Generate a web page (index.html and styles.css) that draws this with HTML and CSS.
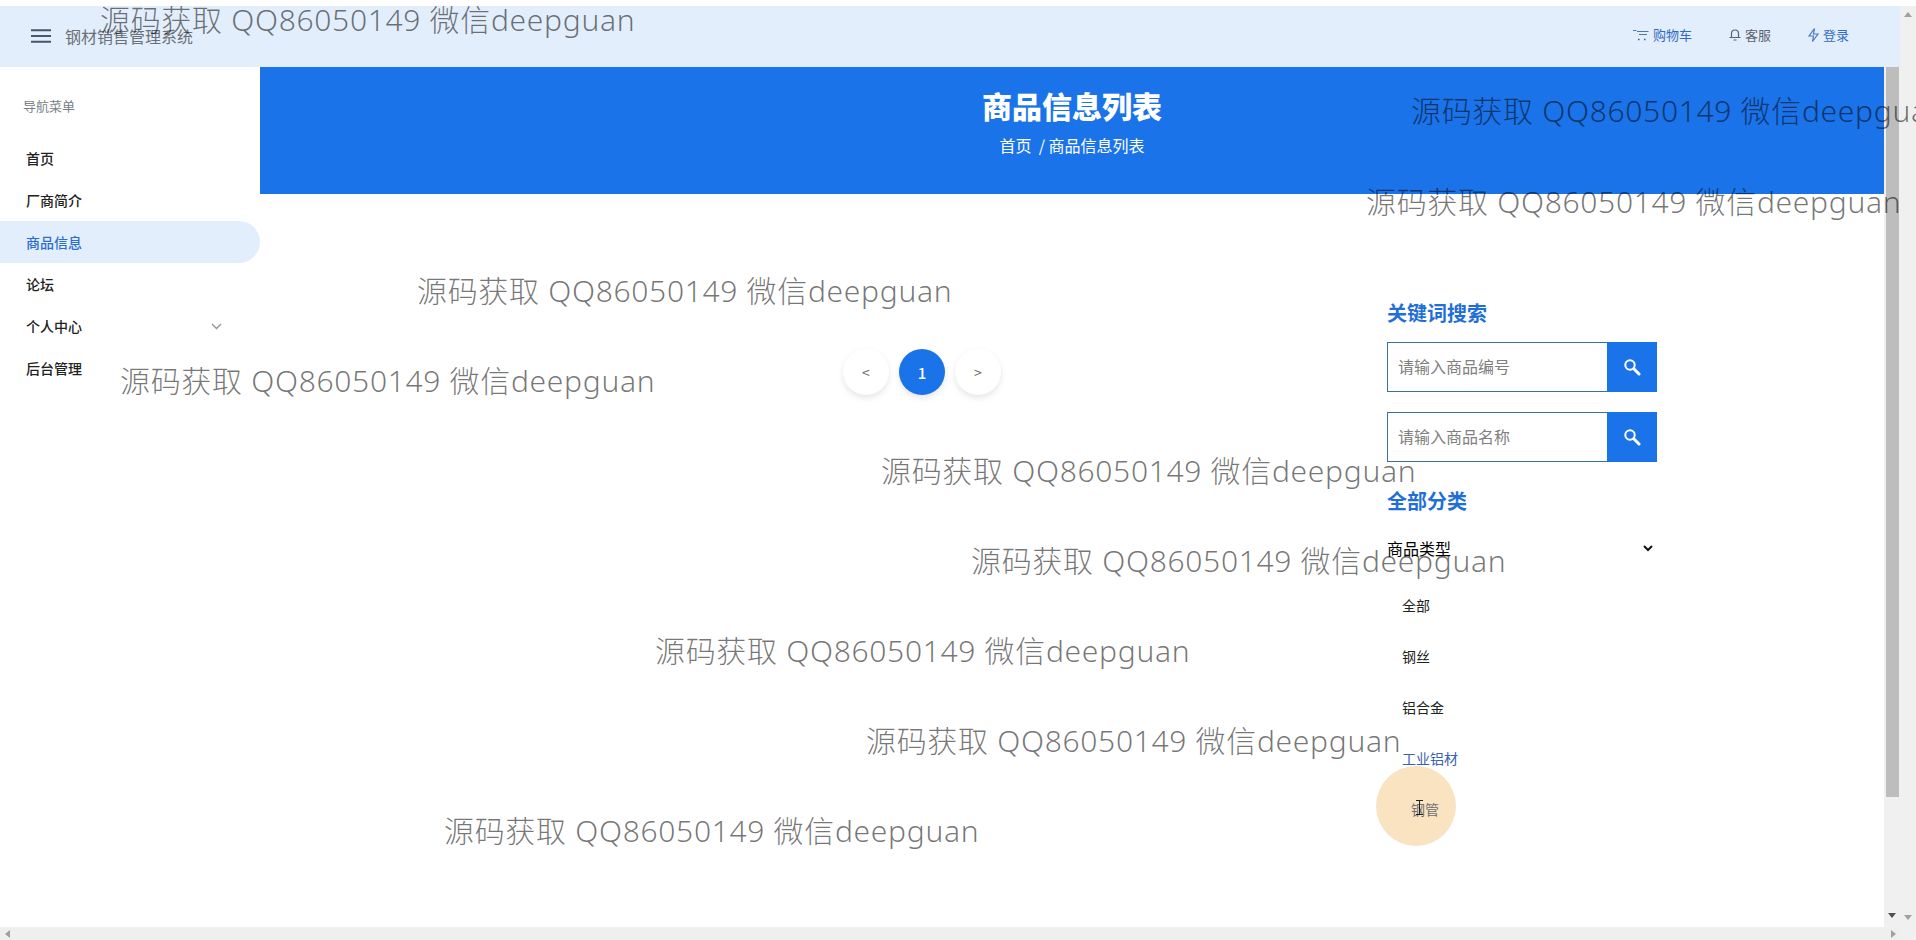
FILE: index.html
```html
<!DOCTYPE html>
<html lang="zh-CN">
<head>
    <meta charset="UTF-8">
    <title>钢材销售管理系统</title>
    <link rel="stylesheet" href="styles.css">
</head>
<body>
    <div class="window">
        <div class="page">
            <div class="top-gap"></div>
            <header class="topbar">
                <div class="brand">
                    <svg class="burger" width="20" height="14" viewBox="0 0 20 14"><path d="M0 1.2h20M0 7h20M0 12.8h20" stroke="#4a5568" stroke-width="2"/></svg>
                    <span>钢材销售管理系统</span>
                </div>
                <nav class="top-links">
                    <a class="blue"><svg width="16" height="12" viewBox="0 0 16 12" fill="none"><path d="M0 1.5h3.5M4 2.5h11.5M6 5.5h8" stroke="#4a78c0" stroke-width="1"/><path d="M5 10.5h1.5M11 10.5h1.5" stroke="#4a5568" stroke-width="1.5"/></svg>购物车</a>
                    <a><svg width="12" height="13" viewBox="0 0 12 13" fill="none" stroke="#5a6270" stroke-width="1.2"><path d="M2.5 9V5.500a3.500 3.500 0 0 1 7 0V9M.5 9.500h11M4.500 12h3"/></svg>客服</a>
                    <a class="blue"><svg width="11" height="14" viewBox="0 0 11 14" fill="none" stroke="#4a78c0" stroke-width="1.2"><path d="M6.500.5 1 8h4.500l-1 5.500L10 6H5.500z"/></svg>登录</a>
                </nav>
            </header>
            <div class="body-row">
                <aside class="sidebar">
                    <div class="side-title">导航菜单</div>
                    <ul class="menu">
                        <li>首页</li>
                        <li>厂商简介</li>
                        <li class="active">商品信息</li>
                        <li>论坛</li>
                        <li>个人中心<svg width="11" height="7" viewBox="0 0 11 7" fill="none"><path d="M1 1l4.500 4.500L10 1" stroke="#8a919c" stroke-width="1.3"/></svg></li>
                        <li>后台管理</li>
                    </ul>
                </aside>
                <main class="content">
                    <section class="banner">
                        <h1>商品信息列表</h1>
                        <p>首页 &nbsp;/ 商品信息列表</p>
                    </section>
                    <div class="container">
                        <div class="list-col">
                            <div class="pager">
                                <span class="dot">&lt;</span>
                                <span class="dot on">1</span>
                                <span class="dot">&gt;</span>
                            </div>
                        </div>
                        <div class="filter-col">
                            <h3>关键词搜索</h3>
                            <div class="search">
                                <input type="text" placeholder="请输入商品编号">
                                <button><svg width="18" height="18" viewBox="0 0 18 18" fill="none"><circle cx="7" cy="7" r="4.7" stroke="#fff" stroke-width="2"/><path d="M10.800 10.800 16 16" stroke="#fff" stroke-width="3" stroke-linecap="round"/></svg></button>
                            </div>
                            <div class="search second">
                                <input type="text" placeholder="请输入商品名称">
                                <button><svg width="18" height="18" viewBox="0 0 18 18" fill="none"><circle cx="7" cy="7" r="4.7" stroke="#fff" stroke-width="2"/><path d="M10.800 10.800 16 16" stroke="#fff" stroke-width="3" stroke-linecap="round"/></svg></button>
                            </div>
                            <h3 class="cat-title">全部分类</h3>
                            <div class="cat-head">
                                <span>商品类型</span>
                                <svg width="10" height="7" viewBox="0 0 10 7" fill="none"><path d="M1 1l4 4 4-4" stroke="#111" stroke-width="2"/></svg>
                            </div>
                            <ul class="cats">
                                <li>全部</li>
                                <li>钢丝</li>
                                <li>铝合金</li>
                                <li class="hover">工业铝材</li>
                                <li class="moved">钢管</li>
                            </ul>
                        </div>
                    </div>
                </main>
                <div class="vbar inner">
                    <div class="thumb"></div>
                    <i class="arrow-down"></i>
                </div>
            </div>
            <div class="hbar">
                <i class="arrow-left"></i>
                <i class="arrow-right"></i>
            </div>
        </div>
        <div class="vbar outer">
            <i class="arrow-up"></i>
            <i class="arrow-down"></i>
        </div>
    </div>

    <!-- mouse highlight -->
    <div class="spot"></div>
    <svg class="ibeam" width="7" height="15" viewBox="0 0 7 15" fill="none"><path d="M0 .5h7M0 14.500h7M3.500 .5v14" stroke="#222" stroke-width="1"/></svg>

    <div class="wm wm1">源码获取 QQ86050149 微信deepguan</div>
    <div class="wm wm2">源码获取 QQ86050149 微信deepguan</div>
    <div class="wm wm3">源码获取 QQ86050149 微信deepguan</div>
    <div class="wm wm4">源码获取 QQ86050149 微信deepguan</div>
    <div class="wm wm5">源码获取 QQ86050149 微信deepguan</div>
    <div class="wm wm6">源码获取 QQ86050149 微信deepguan</div>
    <div class="wm wm7">源码获取 QQ86050149 微信deepguan</div>
    <div class="wm wm8">源码获取 QQ86050149 微信deepguan</div>
    <div class="wm wm9">源码获取 QQ86050149 微信deepguan</div>
    <div class="wm wm10">源码获取 QQ86050149 微信deepguan</div>
</body>
</html>
```

FILE: styles.css
```css
* {
    box-sizing: border-box;
}

html, body {
    height: 100%;
}

body {
    margin: 0;
    overflow: hidden;
    background: #fff;
    color: #111;
    font-family: "Noto Sans CJK SC", "Noto Sans", sans-serif;
}

ul {
    list-style: none;
    margin: 0;
    padding: 0;
}

.window {
    display: flex;
    height: 100vh;
}

.page {
    flex: 1;
    min-width: 0;
    display: flex;
    flex-direction: column;
}

.top-gap {
    height: 6px;
    flex: none;
}

/* header */
.topbar {
    height: 61px;
    flex: none;
    display: flex;
    justify-content: space-between;
    align-items: center;
    padding: 0 51px 2px 31px;
    background: #e3eefc;
}

.brand {
    display: flex;
    align-items: center;
    gap: 14px;
    font-size: 16px;
    color: #6a7078;
}

.top-links {
    display: flex;
    gap: 37px;
    margin-bottom: 2px;
    font-size: 13px;
    color: #5a6270;
}

.top-links a {
    display: flex;
    align-items: center;
    gap: 4px;
}

.top-links a.blue {
    color: #2f6bc4;
}

.body-row {
    flex: 1;
    min-height: 0;
    display: flex;
}

/* sidebar */
.sidebar {
    width: 260px;
    flex: none;
    padding-top: 27px;
}

.side-title {
    padding-left: 23px;
    font-size: 13px;
    line-height: 24px;
    color: #7a7f87;
}

.menu {
    margin-top: 19px;
    font-size: 14px;
    font-weight: 500;
}

.menu li {
    height: 42px;
    display: flex;
    align-items: center;
    justify-content: space-between;
    padding: 0 38px 0 26px;
    color: #222;
}

.menu li.active {
    background: #e3eefc;
    color: #2a6fd0;
    border-radius: 0 21px 21px 0;
}

/* main */
.content {
    flex: 1;
    min-width: 0;
}

.banner {
    height: 127px;
    padding-top: 17px;
    text-align: center;
    color: #fff;
    background: #1a73e8;
}

.banner h1 {
    margin: 0;
    font-size: 30px;
    line-height: 42px;
    font-weight: 900;
}

.banner p {
    margin: 0;
    font-size: 16px;
    line-height: 24px;
    margin-top: 7px;
}

.container {
    width: 1200px;
    margin: 0 auto;
    display: flex;
}

.list-col {
    width: 900px;
    padding-top: 155px;
}

.pager {
    display: flex;
    justify-content: center;
    gap: 10px;
}

.dot {
    width: 46px;
    height: 46px;
    display: flex;
    align-items: center;
    justify-content: center;
    border-radius: 50%;
    background: #fff;
    color: #666;
    font-size: 14px;
    box-shadow: 0 3px 6px rgba(0, 0, 0, 0.1);
}

.dot.on {
    background: #1a73e8;
    color: #fff;
    font-size: 15px;
    font-weight: 500;
}

.filter-col {
    width: 300px;
    padding: 105px 15px 0;
}

.filter-col h3 {
    margin: 0;
    font-size: 20px;
    line-height: 28px;
    font-weight: 700;
    color: #1f6fd8;
}

.search {
    display: flex;
    height: 50px;
    margin-top: 15px;
}

.search.second {
    margin-top: 20px;
}

.search input {
    flex: 1;
    min-width: 0;
    padding: 0 10px 2px;
    font-family: inherit;
    font-size: 16px;
    border: 1px solid #3a6ea5;
    border-right: none;
    border-radius: 0;
    outline: none;
}

.search input::placeholder {
    color: #808080;
}

.search button {
    width: 50px;
    padding: 0;
    border: none;
    display: flex;
    align-items: center;
    justify-content: center;
    background: #1a73e8;
}

.filter-col .cat-title {
    margin-top: 25px;
}

.cat-head {
    display: flex;
    justify-content: space-between;
    align-items: center;
    margin-top: 21px;
    padding-right: 4px;
    font-size: 16px;
    line-height: 24px;
    color: #000;
}

.cats {
    margin-top: 20px;
    padding-left: 15px;
    font-size: 14px;
    color: #222;
}

.cats li {
    height: 51px;
    line-height: 51px;
    position: relative;
    z-index: 2;
}

.cats li.hover {
    color: #3a62b0;
}

.cats li.moved {
    padding-left: 9px;
    color: #6f6f6f;
}

/* fake scrollbars from the capture */
.vbar {
    width: 16px;
    flex: none;
    position: relative;
    background: #f0f0f0;
}

.outer {
    margin-top: 6px;
    height: calc(100% - 6px);
}

.thumb {
    width: 13px;
    height: 730px;
    margin-left: 2px;
    background: #bdbdbd;
}

.hbar {
    height: 13px;
    flex: none;
    position: relative;
    background: #efefef;
}

.vbar i, .hbar i {
    position: absolute;
    width: 0;
    height: 0;
    border-style: solid;
    border-color: transparent;
}

.arrow-down {
    left: 4px;
    bottom: 9px;
    border-width: 5px 4px 0;
    border-top-color: #505050 !important;
}

.outer .arrow-down {
    bottom: 20px;
    border-top-color: #a0a0a0 !important;
}

.arrow-up {
    left: 4px;
    top: 6px;
    border-width: 0 4px 5px;
    border-bottom-color: #a0a0a0 !important;
}

.arrow-left {
    left: 5px;
    top: 3px;
    border-width: 4px 5px 4px 0;
    border-right-color: #a0a0a0 !important;
}

.arrow-right {
    right: 4px;
    top: 3px;
    border-width: 4px 0 4px 5px;
    border-left-color: #a0a0a0 !important;
}

/* overlays */
.spot {
    position: absolute;
    left: 1376px;
    top: 766px;
    width: 80px;
    height: 80px;
    border-radius: 50%;
    background: #f9e3c0;
}

.ibeam {
    position: absolute;
    left: 1416px;
    top: 800px;
    z-index: 3;
}

.wm {
    position: absolute;
    z-index: 4;
    font-family: "Noto Sans", "Noto Sans CJK SC", sans-serif;
    font-size: 30px;
    font-weight: 300;
    line-height: 40px;
    letter-spacing: 0.68px;
    white-space: nowrap;
    color: rgba(0, 0, 0, 0.55);
    pointer-events: none;
}

.wm1 { left: 100px; top: 0; }
.wm2 { left: 1411px; top: 91px; }
.wm3 { left: 1366px; top: 182px; }
.wm4 { left: 417px; top: 271px; }
.wm5 { left: 120px; top: 361px; }
.wm6 { left: 881px; top: 451px; }
.wm7 { left: 971px; top: 541px; }
.wm8 { left: 655px; top: 631px; }
.wm9 { left: 866px; top: 721px; }
.wm10 { left: 444px; top: 811px; }
```
